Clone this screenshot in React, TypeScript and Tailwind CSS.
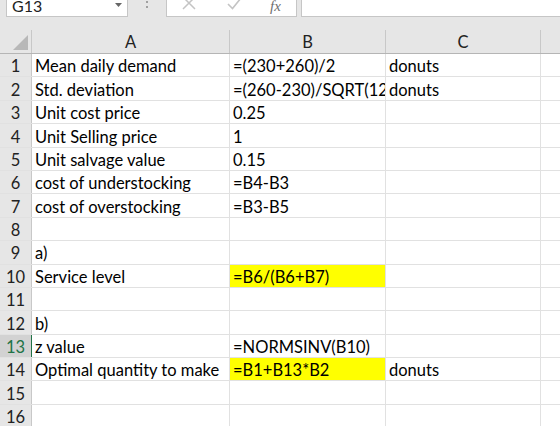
import React from 'react';

type Cell = { a?: string; b?: string; c?: string; hl?: boolean };

// rows 1..16 of the sheet
const rows: Cell[] = [
  { a: 'Mean daily demand', b: '=(230+260)/2', c: 'donuts' },
  { a: 'Std. deviation', b: '=(260-230)/SQRT(12)', c: 'donuts' },
  { a: 'Unit cost price', b: '0.25' },
  { a: 'Unit Selling price', b: '1' },
  { a: 'Unit salvage value', b: '0.15' },
  { a: 'cost of understocking', b: '=B4-B3' },
  { a: 'cost of overstocking', b: '=B3-B5' },
  {},
  { a: 'a)' },
  { a: 'Service level', b: '=B6/(B6+B7)', hl: true },
  {},
  { a: 'b)' },
  { a: 'z value', b: '=NORMSINV(B10)' },
  { a: 'Optimal quantity to make', b: '=B1+B13*B2', c: 'donuts', hl: true },
  {},
  {},
];

const FormulaBar = () => (
  <div className="flex h-[17px] items-end">
    <div className="ml-[6px] w-[122px] h-[17px] bg-white border-b border-x border-[#c6c6c6] relative overflow-hidden">
      <span className="absolute left-[5px] top-[-4px] text-[16px] leading-[20px] text-[#222]">G13</span>
      <svg className="absolute left-[108px] top-[3px]" width="7" height="4" viewBox="0 0 7 4">
        <path d="M0 0h7L3.5 4z" fill="#666" />
      </svg>
    </div>
    <div className="w-[38px] h-[17px] flex flex-col items-center pt-[1px] gap-[3px]">
      <span className="w-[2px] h-[2px] bg-[#a0a0a0]" />
      <span className="w-[2px] h-[2px] bg-[#a0a0a0]" />
    </div>
    <div className="w-[131px] h-[17px] bg-white border-b border-x border-[#c6c6c6] relative overflow-hidden">
      <svg className="absolute left-[15px] top-[-3px]" width="14" height="13" viewBox="0 0 14 13">
        <path d="M1 0l12 12M13 0L1 12" stroke="#c4c4c4" strokeWidth="1.5" />
      </svg>
      <svg className="absolute left-[60px] top-[-2px]" width="15" height="12" viewBox="0 0 15 12">
        <path d="M1 6l4.5 4.5L14 0" stroke="#c4c4c4" strokeWidth="1.6" fill="none" />
      </svg>
      <span className="absolute left-[103px] top-[-4px] text-[15px] leading-[20px] italic text-[#6f6f6f] font-['Liberation_Serif',serif]">fx</span>
    </div>
    <div className="ml-[4px] flex-1 h-[17px] bg-white border-b border-l border-[#c6c6c6]" />
  </div>
);

const cellBase = 'h-full border-r border-[#e1e1e1] overflow-hidden whitespace-nowrap pl-[3px] pt-[3px] flex items-center';

export default function App() {
  return (
    <div className="w-[560px] h-[426px] overflow-hidden bg-[#e6e6e6] font-['Lato',sans-serif] text-[16.5px] text-black">
      <FormulaBar />
      <div className="mt-[13px]">
        {/* column header */}
        <div className="flex h-[24px] border-b border-[#b5b5b5] text-[#222]">
          <div className="w-[32px] h-full border-r border-[#c8c8c8] relative">
            <svg className="absolute right-[3px] bottom-[3px]" width="15" height="15" viewBox="0 0 15 15">
              <path d="M15 0v15H0z" fill="#b8b8b8" />
            </svg>
          </div>
          <div className="w-[198px] h-full border-r border-[#c8c8c8] flex items-center justify-center pt-[2px]">A</div>
          <div className="w-[156px] h-full border-r border-[#c8c8c8] flex items-center justify-center pt-[2px]">B</div>
          <div className="w-[155px] h-full border-r border-[#c8c8c8] flex items-center justify-center pt-[2px]">C</div>
          <div className="flex-1 h-full" />
        </div>
        {rows.map((r, i) => {
          const sel = i === 12;
          return (
            <div key={i} className="flex h-[23.4px] border-b border-[#e1e1e1] bg-white">
              <div
                className={`w-[32px] h-full flex items-center justify-center pt-[3px] border-r ${
                  sel ? 'bg-[#d2d2d2] text-[#217346] border-[#217346]' : 'bg-[#e6e6e6] text-[#222] border-[#c8c8c8]'
                }`}
              >
                {i + 1}
              </div>
              <div className={`w-[198px] ${cellBase}`}>{r.a}</div>
              <div className={`w-[156px] ${cellBase} ${r.hl ? 'bg-[#ffff00]' : ''}`}>{r.b}</div>
              <div className={`w-[155px] ${cellBase}`}>{r.c}</div>
              <div className="flex-1 h-full" />
            </div>
          );
        })}
      </div>
    </div>
  );
}
